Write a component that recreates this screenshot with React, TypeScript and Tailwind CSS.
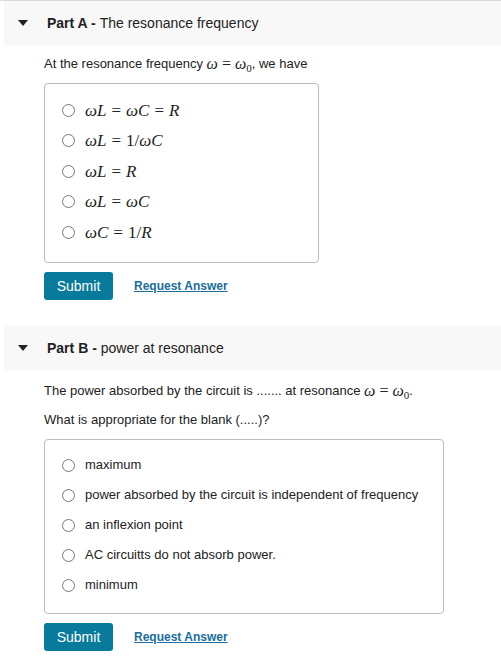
import React from "react";

const sans = { fontFamily: '"Liberation Sans", Arial, sans-serif' };

function Tri() {
  return (
    <svg width="10" height="6" viewBox="0 0 10 6" className="block">
      <polygon points="0,0 10,0 5,6" fill="#222" />
    </svg>
  );
}

function Radio() {
  return <span className="inline-block w-[13px] h-[13px] rounded-full border border-[#767676] bg-white shrink-0" />;
}

const I = ({ children }: { children: React.ReactNode }) => <span className="italic">{children}</span>;
const Eq = ({ m = 5 }: { m?: number }) => (
  <span className="not-italic" style={{ marginLeft: m, marginRight: m }}>=</span>
);

function Math({ children, size = 17 }: { children: React.ReactNode; size?: number }) {
  return (
    <span
      className="text-[#222]"
      style={{ fontFamily: '"Liberation Serif", "Times New Roman", serif', fontSize: size }}
    >
      {children}
    </span>
  );
}

function Header({ part, title }: { part: string; title: string }) {
  return (
    <div className="ml-[4px] bg-[#f8f8f8] h-[44px] flex items-center">
      <div className="w-[43px] flex justify-end pr-[19px]">
        <Tri />
      </div>
      <div className="text-[14px] text-[#222]">
        <span className="font-bold">Part {part} - </span>
        {title}
      </div>
    </div>
  );
}

function Buttons() {
  return (
    <div className="flex items-center ml-[44px]">
      <button className="w-[69px] h-[28px] rounded-[3px] bg-[#087a9b] text-white text-[14px]">Submit</button>
      <a className="ml-[21px] text-[12px] font-bold text-[#1a6d9c] underline">Request Answer</a>
    </div>
  );
}

export default function App() {
  const w0 = (
    <Math size={16}>
      <I>ω</I>
      <Eq m={4} />
      <I>ω</I>
      <span className="text-[11px] relative top-[3px]">0</span>
    </Math>
  );
  const optsA: React.ReactNode[] = [
    <Math key="1"><I>ωL</I><Eq /><I>ωC</I><Eq /><I>R</I></Math>,
    <Math key="2"><I>ωL</I><Eq />1/<I>ωC</I></Math>,
    <Math key="3"><I>ωL</I><Eq /><I>R</I></Math>,
    <Math key="4"><I>ωL</I><Eq /><I>ωC</I></Math>,
    <Math key="5"><I>ωC</I><Eq />1/<I>R</I></Math>,
  ];
  const optsB = [
    "maximum",
    "power absorbed by the circuit is independent of frequency",
    "an inflexion point",
    "AC circuitts do not absorb power.",
    "minimum",
  ];
  return (
    <div className="w-[501px] h-[669px] bg-white overflow-hidden text-[#222]" style={sans}>
      <div className="border-t border-[#dcdcdc]">
        <Header part="A" title="The resonance frequency" />
      </div>
      <div className="ml-[44px] mt-[10px] h-[18px] flex items-center text-[13px]">
        <span>At the resonance frequency&nbsp;</span>
        {w0}
        <span>, we have</span>
      </div>
      <div className="ml-[44px] mt-[10px] w-[275px] h-[180px] border border-[#bdbdbd] rounded-[4px] pt-[11px] pl-[17px]">
        {optsA.map((o, i) => (
          <div key={i} className="h-[30.5px] flex items-center">
            <Radio />
            <span className="ml-[10px]">{o}</span>
          </div>
        ))}
      </div>
      <div className="mt-[9px]">
        <Buttons />
      </div>
      <div className="mt-[26px]">
        <Header part="B" title="power at resonance" />
      </div>
      <div className="ml-[44px] mt-[12px] h-[18px] flex items-center text-[13px]">
        <span>The power absorbed by the circuit is ....... at resonance&nbsp;</span>
        {w0}
        <span>.</span>
      </div>
      <div className="ml-[44px] mt-[11px] h-[18px] flex items-center text-[13px]">What is appropriate for the blank (.....)?</div>
      <div className="ml-[44px] mt-[10px] w-[400px] h-[175px] border border-[#bdbdbd] rounded-[4px] pt-[10px] pl-[17px]">
        {optsB.map((o, i) => (
          <div key={i} className="h-[30px] flex items-center">
            <Radio />
            <span className="ml-[10px] text-[13px]">{o}</span>
          </div>
        ))}
      </div>
      <div className="mt-[9px]">
        <Buttons />
      </div>
    </div>
  );
}
